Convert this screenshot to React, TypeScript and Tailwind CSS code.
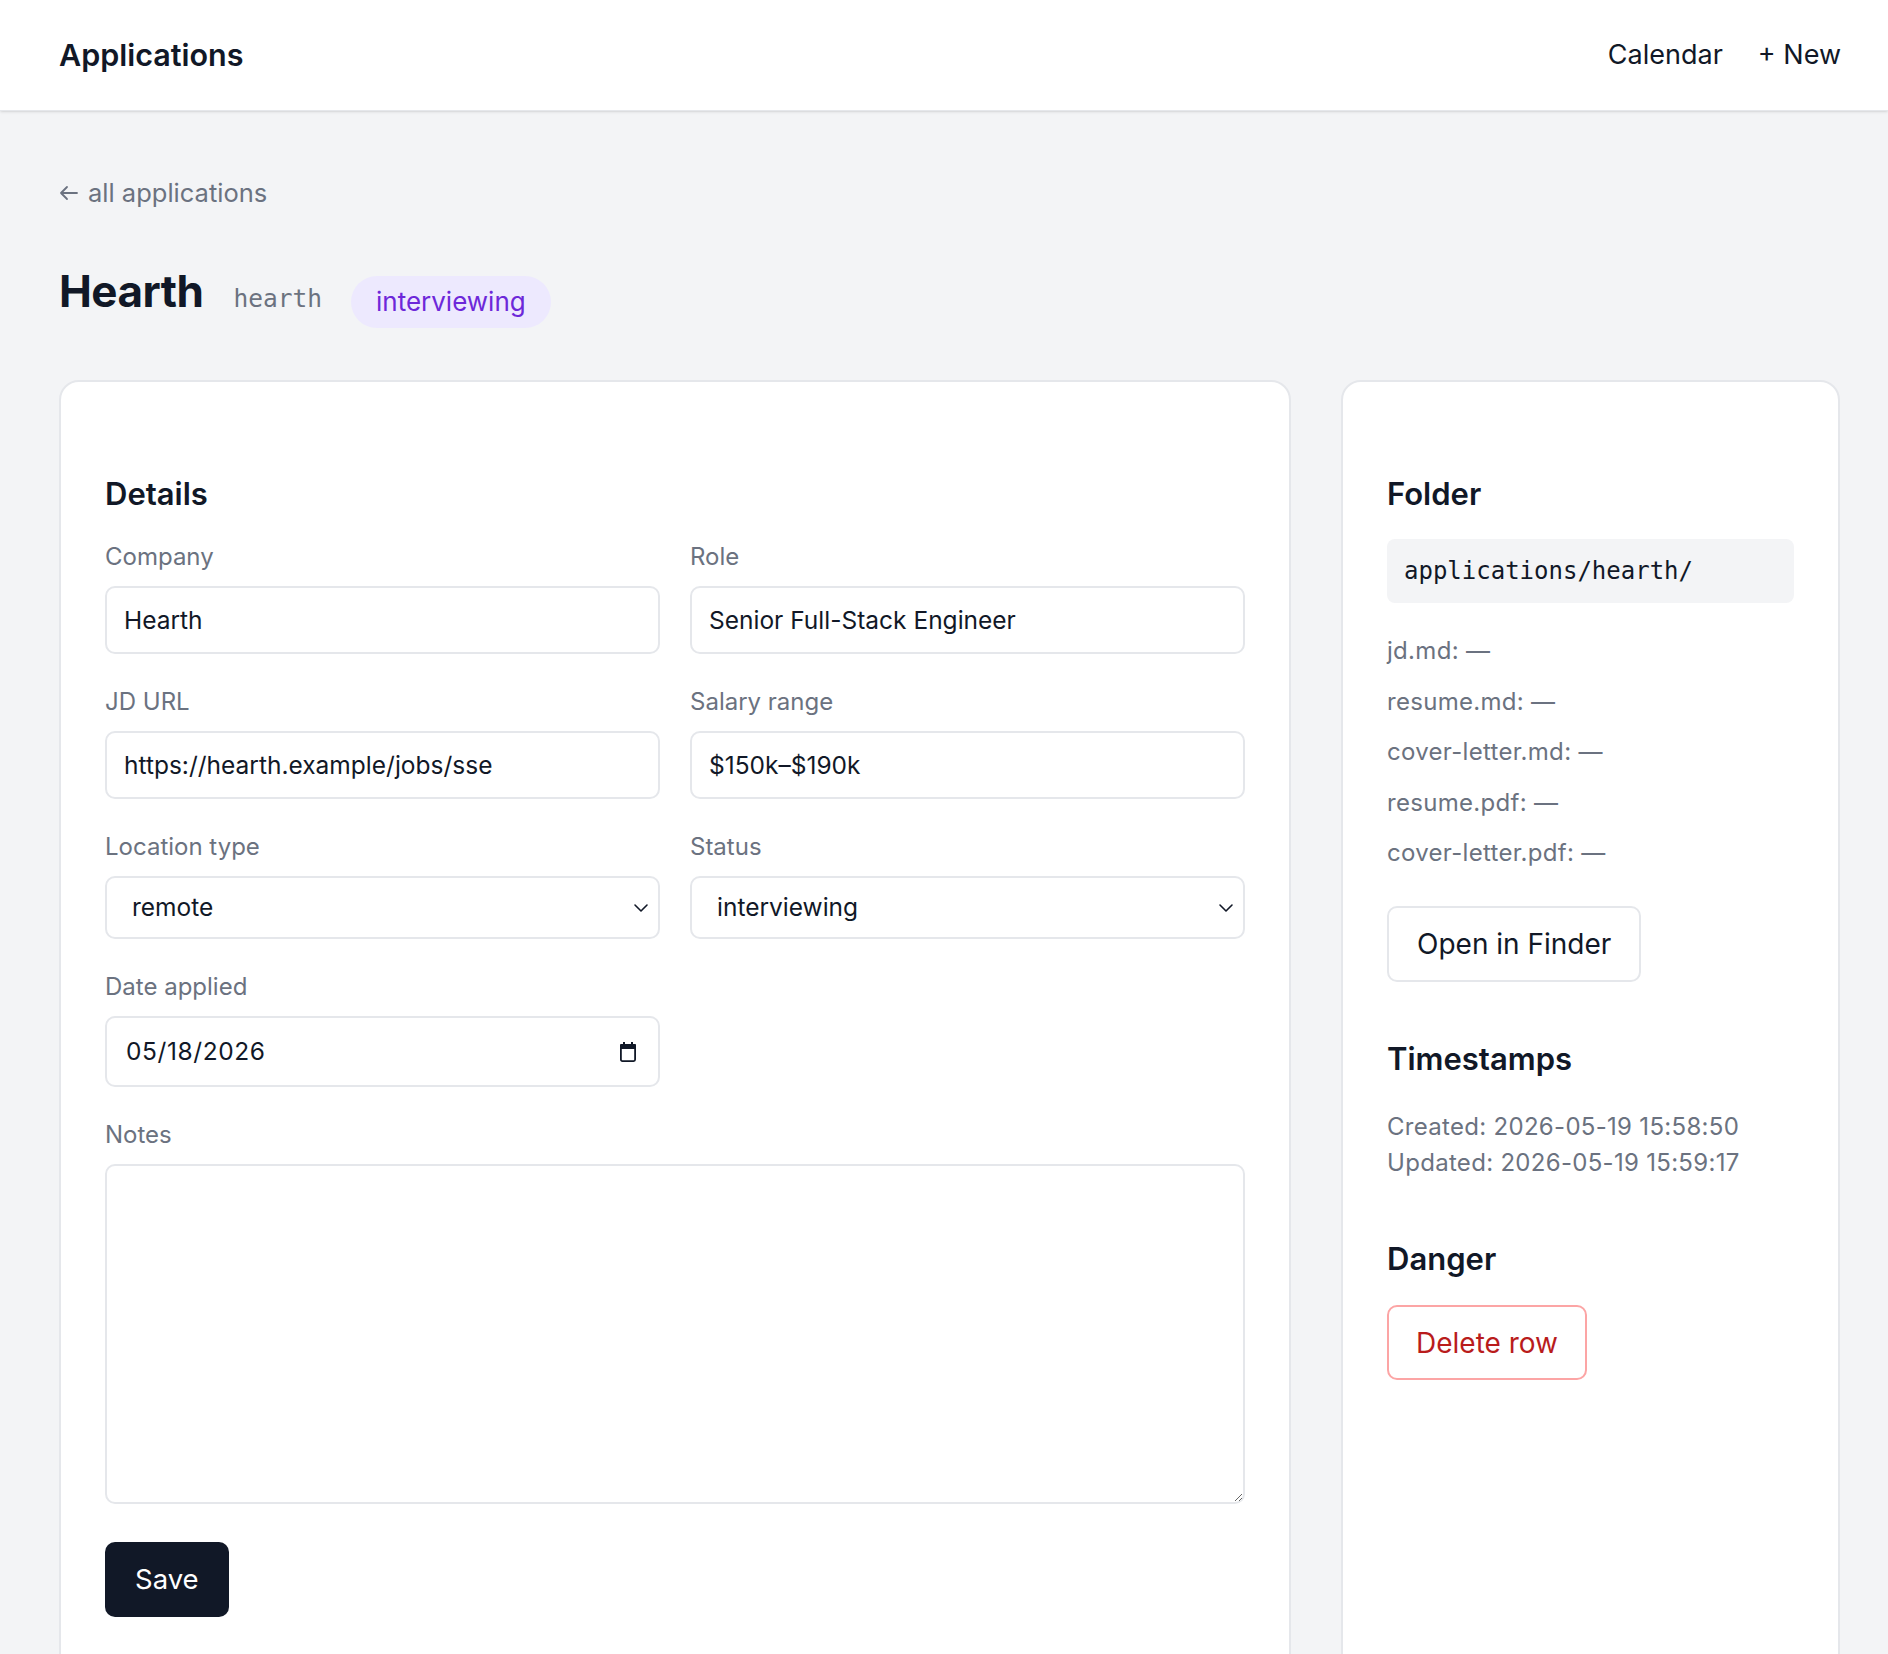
import React from 'react';

const Label: React.FC<{ children: React.ReactNode }> = ({ children }) => (
  <label className="block text-[24px] leading-[32px] text-[#6b7280] mb-[13px]">{children}</label>
);

const TextField: React.FC<{ label: string; value: string }> = ({ label, value }) => (
  <div>
    <Label>{label}</Label>
    <input
      readOnly
      defaultValue={value}
      className="w-full h-[68px] rounded-[10px] border-2 border-[#e5e7eb] bg-white px-[17px] text-[24.5px] text-[#111827] outline-none"
    />
  </div>
);

const SelectField: React.FC<{ label: string; value: string; options: string[] }> = ({ label, value, options }) => (
  <div>
    <Label>{label}</Label>
    <div className="flex h-[63px] items-center rounded-[10px] border-2 border-[#e5e7eb] bg-white pl-[25px] pr-[8px]">
      <select
        defaultValue={value}
        className="flex-1 appearance-none bg-transparent text-[24.5px] text-[#111827] outline-none"
      >
        {options.map((o) => (
          <option key={o}>{o}</option>
        ))}
      </select>
      <svg width="18" height="18" viewBox="0 0 18 18" fill="none" stroke="#111827" strokeWidth="1.6" strokeLinecap="round" strokeLinejoin="round">
        <path d="M3 6l6 6 6-6" />
      </svg>
    </div>
  </div>
);

const CalendarIcon = () => (
  <svg width="20" height="22" viewBox="0 0 20 22" fill="none">
    <rect x="5" y="1" width="2" height="4" fill="#111827" />
    <rect x="13" y="1" width="2" height="4" fill="#111827" />
    <rect x="2" y="3" width="16" height="5" rx="1" fill="#111827" />
    <rect x="2.9" y="3.9" width="14.2" height="16.2" rx="1.5" stroke="#111827" strokeWidth="1.8" />
  </svg>
);

const SectionTitle: React.FC<{ children: React.ReactNode }> = ({ children }) => (
  <h2 className="text-[31px] leading-[40px] font-semibold text-[#111827]">{children}</h2>
);

const files = ['jd.md', 'resume.md', 'cover-letter.md', 'resume.pdf', 'cover-letter.pdf'];

const App: React.FC = () => {
  return (
    <div className="min-h-screen bg-[#f3f4f6] font-['Inter','Noto_Sans',sans-serif] text-[#111827]">
      <header className="flex h-[111px] items-center justify-between border-b border-[#e5e7eb] bg-white pl-[59px] pr-[47px] shadow-sm">
        <span className="text-[30.5px] font-semibold">Applications</span>
        <nav className="flex items-center gap-[35px] text-[27px]">
          <a>Calendar</a>
          <a>+ New</a>
        </nav>
      </header>

      <main className="pl-[59px] pr-[48px] pt-[64px]">
        <a className="flex h-[36px] items-center gap-[9px] text-[25.5px] text-[#6b7280]">
          <svg width="20" height="20" viewBox="0 0 20 20" fill="none" stroke="#6b7280" strokeWidth="1.8" strokeLinecap="round" strokeLinejoin="round">
            <path d="M18 10H2M8 4l-6 6 6 6" />
          </svg>
          all applications
        </a>

        <div className="mt-[54px] flex h-[52px] items-baseline">
          <h1 className="text-[44px] font-bold leading-[52px] tracking-[-0.5px]">Hearth</h1>
          <span className="ml-[30px] font-['DejaVu_Sans_Mono',monospace] text-[24.5px] text-[#6b7280]">hearth</span>
          <span className="ml-[29px] inline-flex h-[52px] items-center rounded-full bg-[#ede9fe] px-[25px] text-[26px] text-[#6d28d9] translate-y-[4px]">
            interviewing
          </span>
        </div>

        <div className="mt-[63px] grid grid-cols-[1fr_499px] gap-[50px]">
          <section className="rounded-[20px] border-2 border-[#e5e7eb] bg-white px-[44px] pt-[92px] pb-[80px]">
            <SectionTitle>Details</SectionTitle>
            <div className="mt-[27px] grid grid-cols-2 gap-x-[30px] gap-y-[32px]">
              <TextField label="Company" value="Hearth" />
              <TextField label="Role" value="Senior Full-Stack Engineer" />
              <TextField label="JD URL" value="https://hearth.example/jobs/sse" />
              <TextField label="Salary range" value="$150k–$190k" />
              <SelectField label="Location type" value="remote" options={['remote', 'hybrid', 'onsite']} />
              <SelectField
                label="Status"
                value="interviewing"
                options={['wishlist', 'applied', 'interviewing', 'offer', 'rejected']}
              />
              <div>
                <Label>Date applied</Label>
                <div className="flex h-[71px] items-center justify-between rounded-[10px] border-2 border-[#e5e7eb] bg-white pl-[19px] pr-[20px]">
                  <input readOnly defaultValue="05/18/2026" className="flex-1 bg-transparent text-[24.5px] tracking-[0.6px] text-[#111827] outline-none" />
                  <CalendarIcon />
                </div>
              </div>
              <div />
              <div className="col-span-2">
                <Label>Notes</Label>
                <textarea className="block h-[340px] w-full rounded-[10px] border-2 border-[#e5e7eb] bg-white p-[17px] text-[24px] outline-none" />
              </div>
            </div>
            <button className="mt-[38px] h-[75px] rounded-[10px] bg-[#111827] px-[30px] text-[27.5px] text-white">Save</button>
          </section>

          <aside className="rounded-[20px] border-2 border-[#e5e7eb] bg-white px-[44px] pt-[92px] pb-[80px]">
            <SectionTitle>Folder</SectionTitle>
            <div className="mt-[25px] flex h-[64px] items-center rounded-[8px] bg-[#f3f4f6] px-[17px] font-['DejaVu_Sans_Mono',monospace] text-[24px] text-[#111827]">
              applications/hearth/
            </div>
            <ul className="mt-[32px] flex flex-col gap-[18.5px] text-[24px] leading-[32px] tracking-[0.3px] text-[#6b7280]">
              {files.map((f) => (
                <li key={f}>{f}: —</li>
              ))}
            </ul>
            <button className="mt-[37px] h-[76px] rounded-[10px] border-2 border-[#e5e7eb] bg-white px-[28px] text-[28px] text-[#111827]">
              Open in Finder
            </button>

            <div className="mt-[57px]">
              <SectionTitle>Timestamps</SectionTitle>
              <div className="mt-[30px] text-[24px] leading-[36px] tracking-[0.3px] text-[#6b7280]">
                <div>Created: 2026-05-19 15:58:50</div>
                <div>Updated: 2026-05-19 15:59:17</div>
              </div>
            </div>

            <div className="mt-[58px]">
              <SectionTitle>Danger</SectionTitle>
              <button className="mt-[26px] h-[75px] rounded-[10px] border-2 border-[#fca5a5] bg-white px-[27px] text-[28px] text-[#b91c1c]">
                Delete row
              </button>
            </div>
          </aside>
        </div>
      </main>
    </div>
  );
};

export default App;
